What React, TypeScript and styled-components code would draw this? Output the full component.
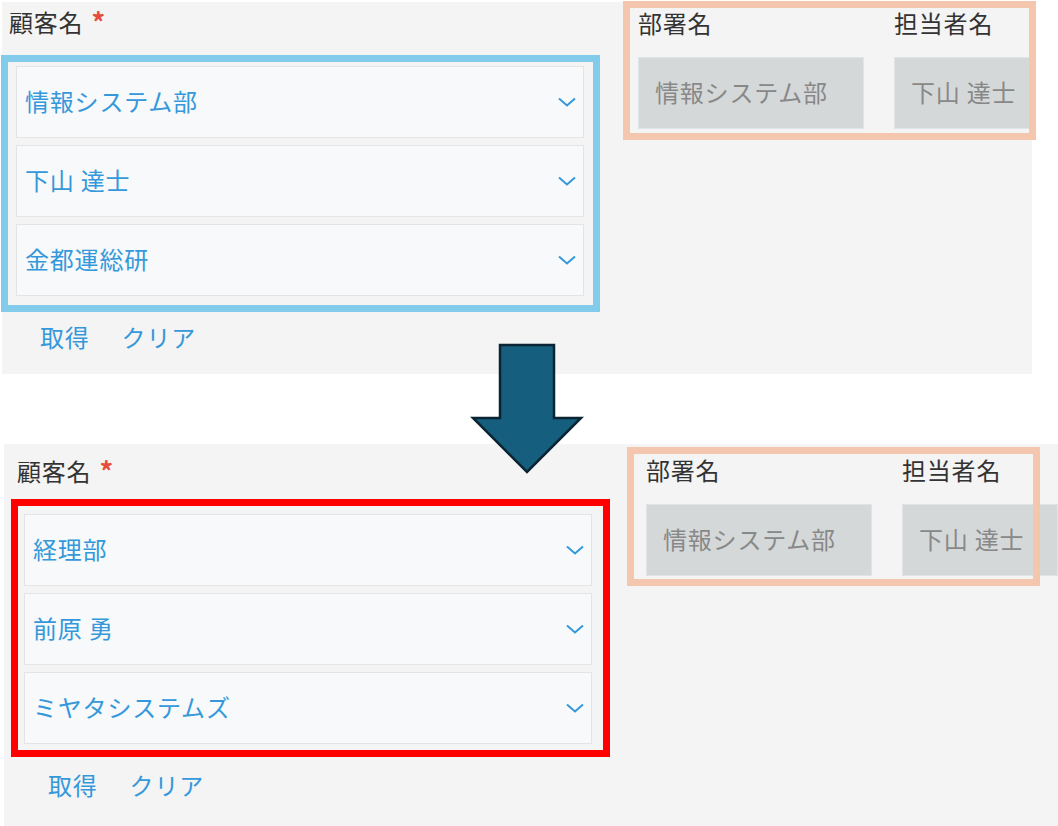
import React from "react";
import styled, { createGlobalStyle } from "styled-components";

const GlobalStyle = createGlobalStyle`
  body {
    margin: 0;
    background: #fff;
    font-family: "Noto Sans CJK JP", "Noto Sans", sans-serif;
    letter-spacing: 0.8px;
  }
`;

const Page = styled.div`
  position: relative;
  width: 1058px;
  height: 826px;
  overflow: hidden;
`;

const Shot = styled.div<{ $w: number; $h: number; $mt: number; $ml: number }>`
  display: flex;
  align-items: flex-start;
  width: ${(p) => p.$w}px;
  height: ${(p) => p.$h}px;
  margin: ${(p) => `${p.$mt}px 0 0 ${p.$ml}px`};
  background: #f4f4f4;
`;

const CustomerColumn = styled.div<{ $ml: number; $pt: number }>`
  display: flex;
  flex-direction: column;
  margin-left: ${(p) => p.$ml}px;
  padding-top: ${(p) => p.$pt}px;
`;

const FieldLabel = styled.div<{ $indent?: number }>`
  padding-left: ${(p) => p.$indent ?? 0}px;
  font-size: 24px;
  line-height: 32px;
  color: #333;
  white-space: nowrap;
`;

const Required = styled.span`
  margin-left: 8px;
  color: #e74c3c;
  font-size: 27px;
  font-weight: 700;
  vertical-align: top;
`;

const Highlight = styled.div<{ $color: string; $pad: string; $m: string }>`
  box-sizing: border-box;
  display: flex;
  flex-direction: column;
  gap: 7px;
  width: 599px;
  margin: ${(p) => p.$m};
  padding: ${(p) => p.$pad};
  border: 7px solid ${(p) => p.$color};
`;

const Select = styled.div`
  box-sizing: border-box;
  display: flex;
  align-items: center;
  justify-content: space-between;
  height: 72px;
  padding: 0 7px 3px 8px;
  background: #f7f9fa;
  border: 1px solid #e3e4e6;
  color: #3498db;
  font-size: 24px;

  svg {
    margin-top: 3px;
  }
`;

const Actions = styled.div`
  display: flex;
  gap: 32px;
  padding-left: 39px;
`;

const LinkButton = styled.button`
  padding: 0;
  border: 0;
  background: none;
  font-family: inherit;
  letter-spacing: inherit;
  font-size: 24px;
  line-height: 32px;
  color: #3498db;
  cursor: pointer;
`;

const LookupGroup = styled.div<{ $mt: number; $ml: number; $pt: number; $pl: number }>`
  position: relative;
  box-sizing: border-box;
  display: flex;
  gap: 30px;
  flex-shrink: 0;
  width: 413px;
  height: 139px;
  margin: ${(p) => `${p.$mt}px 0 0 ${p.$ml}px`};
  padding: ${(p) => `${p.$pt}px 0 0 ${p.$pl}px`};

  &::after {
    content: "";
    position: absolute;
    inset: 0;
    border: 7px solid #f5c6ae;
    pointer-events: none;
  }
`;

const LookupField = styled.div<{ $w: number }>`
  display: flex;
  flex-direction: column;
  flex-shrink: 0;
  width: ${(p) => p.$w}px;
`;

const LookupValue = styled.div`
  box-sizing: border-box;
  display: flex;
  align-items: center;
  height: 72px;
  margin-top: 18px;
  padding: 0 0 3px 16px;
  background: #d5d8d9;
  border: 1px solid #e1e4e5;
  color: #888;
  font-size: 24px;
  white-space: nowrap;
  overflow: hidden;
`;

const ArrowSvg = styled.svg`
  position: absolute;
  left: 470px;
  top: 342px;
`;

const Chevron = () => (
  <svg width="18" height="10" viewBox="0 0 18 10">
    <polyline
      points="1,1.5 9,8.5 17,1.5"
      fill="none"
      stroke="#3498db"
      strokeWidth="2"
    />
  </svg>
);

type ShotConfig = {
  panel: { w: number; h: number; mt: number; ml: number };
  column: { ml: number; pt: number };
  highlight: { color: string; pad: string; m: string };
  group: { mt: number; ml: number; pt: number; pl: number; secondWidth: number };
  customer: string[];
};

const shots: ShotConfig[] = [
  {
    panel: { w: 1030, h: 372, mt: 2, ml: 2 },
    column: { ml: -1, pt: 4 },
    highlight: { color: "#82cbea", pad: "4px 9px 9px 8px", m: "17px 0 9px 0" },
    group: { mt: -1, ml: 23, pt: 6, pl: 15, secondWidth: 138 },
    customer: ["情報システム部", "下山 達士", "金都運総研"],
  },
  {
    panel: { w: 1054, h: 382, mt: 70, ml: 4 },
    column: { ml: 5, pt: 11 },
    highlight: { color: "#ff0000", pad: "8px 11px 6px 6px", m: "12px 0 12px 2px" },
    group: { mt: 3, ml: 17, pt: 7, pl: 19, secondWidth: 156 },
    customer: ["経理部", "前原 勇", "ミヤタシステムズ"],
  },
];

const FormShot = ({ cfg }: { cfg: ShotConfig }) => (
  <Shot $w={cfg.panel.w} $h={cfg.panel.h} $mt={cfg.panel.mt} $ml={cfg.panel.ml}>
    <CustomerColumn $ml={cfg.column.ml} $pt={cfg.column.pt}>
      <FieldLabel $indent={8}>
        顧客名<Required>*</Required>
      </FieldLabel>
      <Highlight $color={cfg.highlight.color} $pad={cfg.highlight.pad} $m={cfg.highlight.m}>
        {cfg.customer.map((v) => (
          <Select key={v}>
            <span>{v}</span>
            <Chevron />
          </Select>
        ))}
      </Highlight>
      <Actions>
        <LinkButton>取得</LinkButton>
        <LinkButton>クリア</LinkButton>
      </Actions>
    </CustomerColumn>

    <LookupGroup
      $mt={cfg.group.mt}
      $ml={cfg.group.ml}
      $pt={cfg.group.pt}
      $pl={cfg.group.pl}
    >
      <LookupField $w={226}>
        <FieldLabel>部署名</FieldLabel>
        <LookupValue>情報システム部</LookupValue>
      </LookupField>
      <LookupField $w={cfg.group.secondWidth}>
        <FieldLabel>担当者名</FieldLabel>
        <LookupValue>下山 達士</LookupValue>
      </LookupField>
    </LookupGroup>
  </Shot>
);

const App = () => {
  return (
    <Page>
      <GlobalStyle />
      {shots.map((s, i) => (
        <FormShot key={i} cfg={s} />
      ))}
      <ArrowSvg width="116" height="134" viewBox="0 0 116 134">
        <polygon
          points="30,3 84,3 84,76 111,76 57,130 3,76 30,76"
          fill="#165e7e"
          stroke="#0b2434"
          strokeWidth="2.5"
          strokeLinejoin="miter"
        />
      </ArrowSvg>
    </Page>
  );
};

export default App;
